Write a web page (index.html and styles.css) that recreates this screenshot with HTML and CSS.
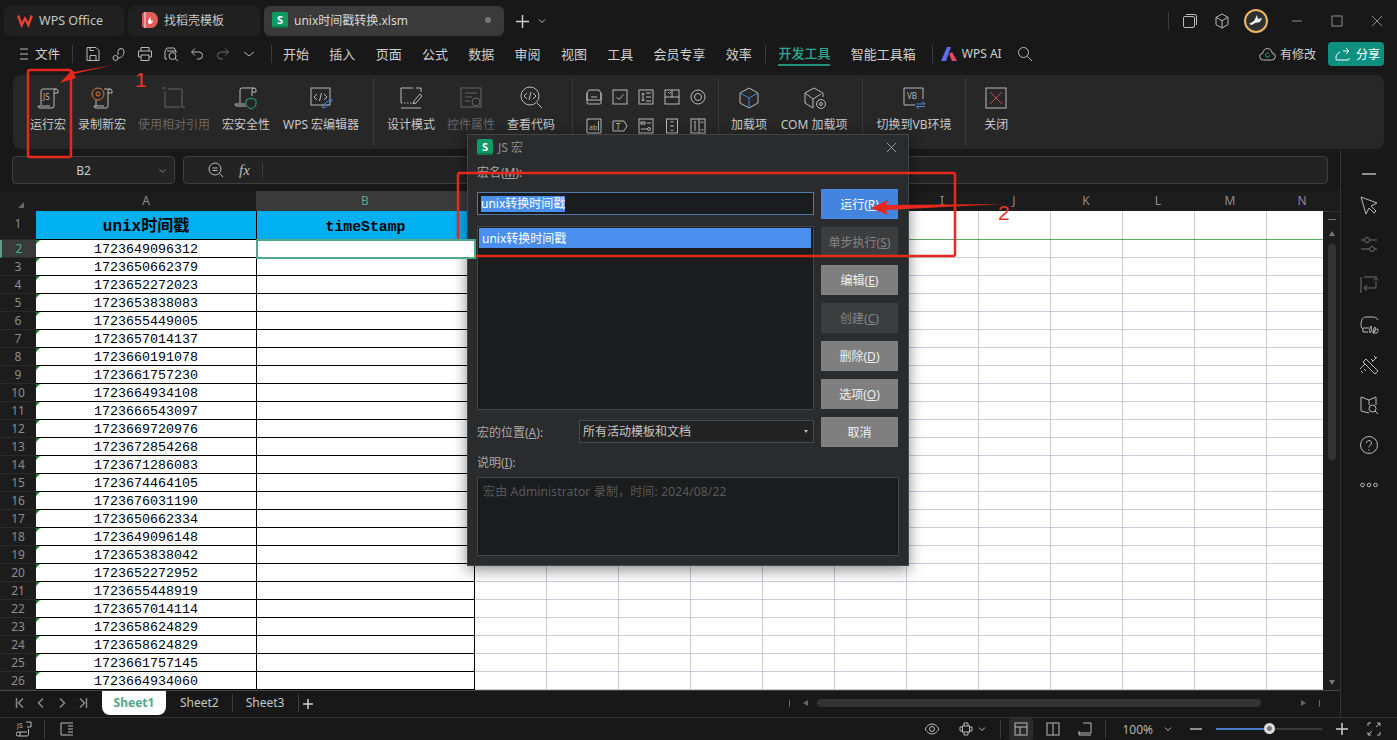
FILE: index.html
```html
<!DOCTYPE html>
<html lang="zh-CN">
<head>
  <meta charset="UTF-8">
  <title>unix时间戳转换.xlsm - WPS Office</title>
  <link rel="stylesheet" href="styles.css">
</head>
<body>
  <div class="titlebar">
    <div class="tab tab-home">
      <svg class="logo logo-wps" viewBox="0 0 16 16"><path d="M1.200 3.500L4.600 13 8 6.500 11.400 13l3.400-9.500"/></svg>
      <span>WPS Office</span>
    </div>
    <div class="tab tab-tpl">
      <svg class="logo" viewBox="0 0 16 16"><path d="M3 0h6a7 8 0 0 1 0 16H3a3 3 0 0 1-3-3V3a3 3 0 0 1 3-3z" fill="#e25a5a"/><path d="M3 0v16" stroke="#f2a0a0" stroke-width="2"/><path d="M8 4c0 3-2 3-2 6 0 1.500 1 2 2 2s3-1 3-3.500c-1 .5-1.500.5-2 0-.5-1-.5-3-1-4.500z" fill="#fff"/></svg>
      <span>找稻壳模板</span>
    </div>
    <div class="tab tab-active">
      <span class="s-badge">S</span>
      <span class="tab-name">unix时间戳转换.xlsm</span>
      <span class="tab-dot"></span>
    </div>
    <svg class="ic tab-plus" viewBox="0 0 16 16"><path d="M8 1v14M1 8h14"/></svg>
    <svg class="ic chev" viewBox="0 0 10 10"><path d="M2 3.500l3 3 3-3"/></svg>
    <div class="window-ctl">
      <i class="vsep"></i>
      <svg class="ic" viewBox="0 0 16 16"><rect x="1.500" y="3.500" width="11" height="11" rx="1.500"/><path d="M4 1.500h9a1.500 1.500 0 0 1 1.500 1.500v9"/></svg>
      <svg class="ic" viewBox="0 0 16 16"><path d="M8 1l6 3.300v7.400L8 15l-6-3.300V4.300zM2 4.300l6 3.400 6-3.400M8 7.700V15"/></svg>
      <div class="avatar"><svg viewBox="0 0 20 20"><path d="M3 13l5-3 3-6 1 4 4-1-2 4-5 1-3 2z" fill="#f4f4f4"/></svg></div>
      <svg class="ic win-min" viewBox="0 0 12 12"><path d="M1 6h10"/></svg>
      <svg class="ic win-max" viewBox="0 0 12 12"><rect x="1" y="1" width="10" height="10"/></svg>
      <svg class="ic win-close" viewBox="0 0 12 12"><path d="M1 1l10 10M11 1L1 11"/></svg>
    </div>
  </div>

  <div class="menubar">
    <svg class="ic ic-menu" viewBox="0 0 8 12"><path d="M0 1h8M0 6h8M0 11h8"/></svg>
    <span class="file-label">文件</span>
    <i class="vsep sep-file"></i>
    <div class="quick">
      <svg class="ic" viewBox="0 0 16 16"><path d="M2 1.500h9l3 3v10H2zM5 14.500v-5h6v5M5 1.500v3h4"/></svg>
      <svg class="ic" viewBox="0 0 16 16"><circle cx="4.500" cy="12" r="2.500"/><path d="M7 12c3 0 6-2 6-6.500a3 3 0 0 0-6 0V9"/></svg>
      <svg class="ic" viewBox="0 0 16 16"><path d="M4 5V1.500h8V5M4 11H1.500V5h13v6H12M4 9h8v5.500H4z"/></svg>
      <svg class="ic" viewBox="0 0 16 16"><path d="M4 13H2V5l2-3h7l2 3v2M4 5h9"/><circle cx="9.500" cy="10" r="3.500"/><path d="M12 12.500l3 2.500"/></svg>
      <svg class="ic" viewBox="0 0 16 16"><path d="M3 6h7a3.500 3.500 0 0 1 0 7H8M6 2.500L2.500 6 6 9.500"/></svg>
      <svg class="ic ic-off" viewBox="0 0 16 16"><path d="M13 6H6a3.500 3.500 0 0 0 0 7h2M10 2.500L13.500 6 10 9.500"/></svg>
      <svg class="ic" viewBox="0 0 16 16"><path d="M3 6l5 4 5-4"/></svg>
    </div>
    <i class="vsep sep-menu"></i>
    <nav class="menu">
      <span>开始</span><span>插入</span><span>页面</span><span>公式</span><span>数据</span><span>审阅</span><span>视图</span><span>工具</span><span>会员专享</span><span>效率</span>
      <i class="vsep"></i>
      <span class="on">开发工具</span><span>智能工具箱</span>
      <i class="vsep sep-ai"></i>
      <span class="wps-ai"><svg viewBox="0 0 16 14"><path d="M0 14L6 0h4L5 14z" fill="#5b6cf0"/><path d="M8 7l3 7h5l-5-9z" fill="#e8476a"/></svg>WPS AI</span>
      <svg class="ic ic-search" viewBox="0 0 16 16"><circle cx="6.500" cy="6.500" r="5"/><path d="M10.300 10.300L15 15"/></svg>
    </nav>
    <div class="menu-right">
      <svg class="ic ic-cloud" viewBox="0 0 17 14"><path d="M4.500 13a3.500 3.500 0 0 1-.5-7 4.500 4.500 0 0 1 9 0 3.500 3.500 0 0 1-.5 7z"/><path class="green" d="M10.500 8a2 2 0 1 1-1-1.700"/></svg>
      <span>有修改</span>
      <button class="share"><svg class="ic" viewBox="0 0 16 16"><path d="M8 5h6M11 2l3 3-3 3M5 6c-2 1-4 3-4 5v2a1 1 0 0 0 1 1h11a1 1 0 0 0 1-1v-1"/></svg>分享</button>
    </div>
  </div>

  <div class="ribbon">
    <div class="rb"><svg class="ic" viewBox="0 0 24 24"><path d="M5 19V5a2 2 0 0 1 2-2h13a2 2 0 0 0-2 2v15a2 2 0 0 1-2 2H4a2 2 0 0 1-2-2h12"/><path d="M20 3a2 2 0 0 1 2 2v2h-4"/><text x="7" y="14" class="ic-text">JS</text></svg><span>运行宏</span></div>
    <div class="rb"><svg class="ic" viewBox="0 0 24 24"><path d="M14 3h6a2 2 0 0 0-2 2v15a2 2 0 0 1-2 2H6a2 2 0 0 1-2-2h10M6 20V14"/><path d="M20 3a2 2 0 0 1 2 2v2h-4"/><circle class="orange" cx="8" cy="8" r="6"/><circle class="orange" cx="8" cy="8" r="2"/></svg><span>录制新宏</span></div>
    <div class="rb off"><svg class="ic" viewBox="0 0 24 24"><path d="M6 3h14v17M18 21H3V6"/><path d="M1 1v2M3 1v2M20 20v2M22 20v2"/></svg><span>使用相对引用</span></div>
    <div class="rb"><svg class="ic" viewBox="0 0 24 24"><path d="M6 17V4a2 2 0 0 1 2-2h12a2 2 0 0 0-2 2v6M12 20H3a2 2 0 0 1-2-2h10"/><path d="M20 2a2 2 0 0 1 2 2v2h-4"/><path class="green" d="M17 12l5 2v4c0 3-3 4-5 5-2-1-5-2-5-5v-4z"/></svg><span>宏安全性</span></div>
    <div class="rb rb-wps"><svg class="ic" viewBox="0 0 24 24"><rect x="2" y="2" width="19" height="17"/><path d="M8 8l-3 3 3 3M15 8l3 3-3 3M12.500 7l-2 8"/><path class="blue" d="M22 13l1.500 1.500-7 7-3 .5.500-3z"/></svg><span>WPS 宏编辑器</span></div>
    <i class="rb-sep"></i>
    <div class="rb"><svg class="ic" viewBox="0 0 24 24"><path d="M2 22h20M2 2h12M2 2v15M22 2v4M17 2h5"/><path class="dotted" d="M2 17h14"/><path d="M15 15l6-7 2 2-6 7-3 1z"/></svg><span>设计模式</span></div>
    <div class="rb off"><svg class="ic" viewBox="0 0 24 24"><rect x="2" y="2" width="20" height="19"/><path d="M6 7h12M6 11h7M6 15h5"/><circle cx="17" cy="16" r="4"/></svg><span>控件属性</span></div>
    <div class="rb"><svg class="ic" viewBox="0 0 24 24"><circle cx="11" cy="10" r="9"/><path d="M18 17l5 5M8 7l-3 3 3 3M14 7l3 3-3 3M12 6l-2 8"/></svg><span>查看代码</span></div>
    <i class="rb-sep sep-wide"></i>
    <div class="ctl-grid">
      <svg class="ic" viewBox="0 0 16 16"><path d="M3 1h10l2 3v10a1 1 0 0 1-1 1H2a1 1 0 0 1-1-1V4zM1 4v7h14V4M5 8h6"/></svg>
      <svg class="ic" viewBox="0 0 16 16"><rect x="1" y="1" width="14" height="14"/><path d="M4.500 8l2.500 2.500 4.500-5"/></svg>
      <svg class="ic" viewBox="0 0 16 16"><rect x="1" y="1" width="14" height="14"/><path d="M5 4v8M3.500 5.500L5 4l1.500 1.500M3.500 10.500L5 12l1.500-1.500M8 4h5M8 8h5M8 12h5"/></svg>
      <svg class="ic" viewBox="0 0 16 16"><rect x="1" y="1" width="14" height="14"/><path d="M1 8h14M8 1v7M4 3l1.500 1.500L7 3"/></svg>
      <svg class="ic" viewBox="0 0 16 16"><circle cx="8" cy="8" r="7"/><circle cx="8" cy="8" r="3.500"/></svg>
      <svg class="ic" viewBox="0 0 16 16"><path d="M1 1h14v14H1z"/><text x="3" y="12" class="ic-text small">ab</text><path d="M12.500 3v10"/></svg>
      <svg class="ic" viewBox="0 0 16 16"><path d="M1 3h11l3 5-3 5H1z"/><text x="4" y="12" class="ic-text">T</text></svg>
      <svg class="ic" viewBox="0 0 16 16"><rect x="1" y="1" width="14" height="14"/><rect x="3" y="4" width="4" height="2"/><path d="M9 5h4M3 11h6"/><circle cx="11" cy="11" r="1.500"/></svg>
      <svg class="ic" viewBox="0 0 16 16"><rect x="2.500" y="1" width="11" height="14"/><path d="M6 8h4M6.500 4.500L8 3l1.500 1.500M6.500 11.500L8 13l1.500-1.500"/></svg>
      <svg class="ic" viewBox="0 0 16 16"><rect x="1" y="1" width="14" height="14"/><path d="M5 4l1-1v10M10 1v14M11.500 5L13 3.500 14.500 5M11.500 11L13 12.500 14.500 11" transform="translate(-1 0)"/></svg>
    </div>
    <i class="rb-sep sep-tight"></i>
    <div class="rb"><svg class="ic" viewBox="0 0 24 24"><path d="M12 2l9 5v10l-9 5-9-5V7z"/><path class="blue" d="M3 7l9 5 9-5M12 12v10"/></svg><span>加载项</span></div>
    <div class="rb rb-com"><svg class="ic" viewBox="0 0 24 24"><path d="M11 13L11 22 3 17V7l9-5 9 5v4M3 7l8 6 8-5"/><circle cx="19" cy="18" r="4.500"/><circle cx="19" cy="18" r="1.500"/></svg><span>COM 加载项</span></div>
    <i class="rb-sep"></i>
    <div class="rb rb-vb"><svg class="ic" viewBox="0 0 24 24"><path d="M13 19H2V2h19v11"/><text x="5" y="13" class="ic-text">VB</text><path class="blue" d="M14 18h9M20 15.500l3 2.500M17 23l-3-2.500h9"/></svg><span>切换到VB环境</span></div>
    <i class="rb-sep"></i>
    <div class="rb rb-close"><svg class="ic" viewBox="0 0 24 24"><rect x="2" y="2" width="20" height="20"/><path class="red" d="M6 6l12 12M18 6L6 18"/></svg><span>关闭</span></div>
  </div>

  <div class="work">
    <div class="sheet-area">
      <div class="formula">
        <div class="namebox"><span>B2</span><svg class="ic" viewBox="0 0 10 10"><path d="M1.500 3.500L5 7l3.500-3.500"/></svg></div>
        <div class="fxbox">
          <svg class="ic" viewBox="0 0 16 16"><circle cx="7" cy="7" r="6"/><path d="M4.500 6h5M4.500 8.500h5M11.500 11.500L15 15"/></svg>
          <em>fx</em>
          <i class="vsep"></i>
        </div>
      </div>

      <div class="colhead">
        <span class="corner"></span>
        <span class="col-a">A</span>
        <span class="col-b">B</span>
        <span></span><span></span><span></span><span></span><span></span><span></span><span>I</span><span>J</span><span>K</span><span>L</span><span>M</span><span>N</span>
      </div>

      <div class="grid-wrap">
        <div class="grid">
          <div class="row row-title"><span class="rh">1</span><span class="cell head">unix时间戳</span><span class="cell head latin">timeStamp</span><span class="rest"></span></div>
          <div class="row row-active"><span class="rh">2</span><span class="cell num">1723649096312</span><span class="cell sel"></span><span class="rest"></span></div>
          <div class="row"><span class="rh">3</span><span class="cell num">1723650662379</span><span class="cell"></span><span class="rest"></span></div>
          <div class="row"><span class="rh">4</span><span class="cell num">1723652272023</span><span class="cell"></span><span class="rest"></span></div>
          <div class="row"><span class="rh">5</span><span class="cell num">1723653838083</span><span class="cell"></span><span class="rest"></span></div>
          <div class="row"><span class="rh">6</span><span class="cell num">1723655449005</span><span class="cell"></span><span class="rest"></span></div>
          <div class="row"><span class="rh">7</span><span class="cell num">1723657014137</span><span class="cell"></span><span class="rest"></span></div>
          <div class="row"><span class="rh">8</span><span class="cell num">1723660191078</span><span class="cell"></span><span class="rest"></span></div>
          <div class="row"><span class="rh">9</span><span class="cell num">1723661757230</span><span class="cell"></span><span class="rest"></span></div>
          <div class="row"><span class="rh">10</span><span class="cell num">1723664934108</span><span class="cell"></span><span class="rest"></span></div>
          <div class="row"><span class="rh">11</span><span class="cell num">1723666543097</span><span class="cell"></span><span class="rest"></span></div>
          <div class="row"><span class="rh">12</span><span class="cell num">1723669720976</span><span class="cell"></span><span class="rest"></span></div>
          <div class="row"><span class="rh">13</span><span class="cell num">1723672854268</span><span class="cell"></span><span class="rest"></span></div>
          <div class="row"><span class="rh">14</span><span class="cell num">1723671286083</span><span class="cell"></span><span class="rest"></span></div>
          <div class="row"><span class="rh">15</span><span class="cell num">1723674464105</span><span class="cell"></span><span class="rest"></span></div>
          <div class="row"><span class="rh">16</span><span class="cell num">1723676031190</span><span class="cell"></span><span class="rest"></span></div>
          <div class="row"><span class="rh">17</span><span class="cell num">1723650662334</span><span class="cell"></span><span class="rest"></span></div>
          <div class="row"><span class="rh">18</span><span class="cell num">1723649096148</span><span class="cell"></span><span class="rest"></span></div>
          <div class="row"><span class="rh">19</span><span class="cell num">1723653838042</span><span class="cell"></span><span class="rest"></span></div>
          <div class="row"><span class="rh">20</span><span class="cell num">1723652272952</span><span class="cell"></span><span class="rest"></span></div>
          <div class="row"><span class="rh">21</span><span class="cell num">1723655448919</span><span class="cell"></span><span class="rest"></span></div>
          <div class="row"><span class="rh">22</span><span class="cell num">1723657014114</span><span class="cell"></span><span class="rest"></span></div>
          <div class="row"><span class="rh">23</span><span class="cell num">1723658624829</span><span class="cell"></span><span class="rest"></span></div>
          <div class="row"><span class="rh">24</span><span class="cell num">1723658624829</span><span class="cell"></span><span class="rest"></span></div>
          <div class="row"><span class="rh">25</span><span class="cell num">1723661757145</span><span class="cell"></span><span class="rest"></span></div>
          <div class="row"><span class="rh">26</span><span class="cell num">1723664934060</span><span class="cell"></span><span class="rest"></span></div>
        </div>
        <div class="vscroll">
          <i class="vs-dash"></i>
          <i class="tri-up"></i>
          <i class="vs-thumb"></i>
          <i class="tri-down"></i>
        </div>
      </div>

      <div class="sheetbar">
        <div class="sheet-nav">
          <svg class="ic" viewBox="0 0 10 12"><path d="M1.500 1v10M8 1.500L3.500 6 8 10.500"/></svg>
          <svg class="ic" viewBox="0 0 10 12"><path d="M7 1.500L2.500 6 7 10.500"/></svg>
          <svg class="ic" viewBox="0 0 10 12"><path d="M3 1.500L7.500 6 3 10.500"/></svg>
          <svg class="ic" viewBox="0 0 10 12"><path d="M8.500 1v10M2 1.500L6.500 6 2 10.500"/></svg>
        </div>
        <span class="sheet sheet-on">Sheet1</span>
        <span class="sheet">Sheet2</span><i class="vsep"></i>
        <span class="sheet">Sheet3</span><i class="vsep"></i>
        <svg class="ic sheet-add" viewBox="0 0 10 10"><path d="M5 0v10M0 5h10"/></svg>
        <div class="hscroll">
          <i class="hs-mark"></i>
          <i class="tri-left"></i>
          <i class="hs-thumb"></i>
          <i class="tri-right"></i>
          <i class="hs-mark"></i>
        </div>
      </div>
    </div>

    <aside class="sidebar">
      <svg class="ic side-dash" viewBox="0 0 20 20"><path d="M3 10h14"/></svg>
      <svg class="ic" viewBox="0 0 20 20"><path d="M2 2l16 6-6 3 5 5-2 2-5-5-3 6z"/></svg>
      <svg class="ic ic-off" viewBox="0 0 20 20"><circle cx="8" cy="5" r="2.500"/><circle cx="13" cy="14" r="2.500"/><path d="M2 5h3.500M10.500 5H18M2 14h8.500M15.500 14H18"/></svg>
      <svg class="ic ic-off" viewBox="0 0 20 20"><path d="M2 2v16M5 2h13M17 6v6a1 1 0 0 1-1 1H6M8 10l-3 3 3 3M14.500 5.500L17 3l2.500 2.500"/></svg>
      <svg class="ic" viewBox="0 0 20 20"><path d="M9 17H4v-3c-2-1-2-3-2-5s1-7 5-7h7c2 0 4 1 5 3M4 13h6"/><path d="M11 18c-1-3 0-5 1-7 1 2 1 5-1 7zM14 18c0-3 1-5 2-6 1 3 0 5-2 6zM18 18c-1 0-3 0-4 0 0-2 3-4 5-4 0 2 0 3-1 4z"/></svg>
      <svg class="ic" viewBox="0 0 20 20"><path d="M4 7l3-3 12 12-3 3zM1 14l5-5M13 7l5-5"/><path d="M2 16l2 2M5 14l2 2M12 4l2 2M15 1l2 2"/></svg>
      <svg class="ic" viewBox="0 0 20 20"><path d="M10 18L2 16V2l8 3 7-3v8M10 5v5"/><circle cx="13.500" cy="13.500" r="3.500"/><path d="M16 16l3 3"/></svg>
      <svg class="ic" viewBox="0 0 20 20"><circle cx="10" cy="10" r="8.500"/><path d="M7.500 8a2.500 2.500 0 1 1 4 2c-1 .8-1.500 1.200-1.500 2.500M10 14.500v1"/></svg>
      <svg class="ic" viewBox="0 0 20 20"><circle cx="3.500" cy="10" r="1.800"/><circle cx="10" cy="10" r="1.800"/><circle cx="16.500" cy="10" r="1.800"/></svg>
    </aside>
  </div>

  <footer class="statusbar">
    <svg class="ic st-js" viewBox="0 0 16 16"><path d="M2 15h9a1.500 1.500 0 0 0 1.500-1.500V8M4 15v-4h7M2 15a1.500 1.500 0 0 1 0-4h2"/><text x="1" y="7" class="ic-text small">JS</text><path d="M10 1h5v5h-4"/></svg>
    <i class="vsep"></i>
    <svg class="ic st-pane" viewBox="0 0 14 14"><path d="M13 1H1v12h12M8 4h5M8 7h5M8 10h5"/></svg>
    <div class="status-right">
      <svg class="ic st-eye" viewBox="0 0 16 16"><path d="M1 8c2-3 4-5 7-5s5 2 7 5c-2 3-4 5-7 5s-5-2-7-5z"/><circle cx="8" cy="8" r="2.500"/></svg>
      <svg class="ic st-cross" viewBox="0 0 16 16"><rect x="4.500" y="5" width="7" height="6"/><path d="M6 5V2h4v3M6 11v3h4v-3M4.500 6H2v4h2.500M11.500 6H14v4h-2.500"/></svg>
      <svg class="ic chev" viewBox="0 0 10 10"><path d="M2 3.500l3 3 3-3"/></svg>
      <i class="vsep"></i>
      <span class="view view-on"><svg class="ic" viewBox="0 0 14 14"><rect x="1" y="1" width="12" height="12"/><path d="M1 5h12M6 5v8"/></svg></span>
      <span class="view"><svg class="ic" viewBox="0 0 14 14"><rect x="1" y="1" width="12" height="12"/><path d="M7 1v12"/></svg></span>
      <span class="view"><svg class="ic" viewBox="0 0 14 14"><path d="M5 1h8v10H1v2h12M1 11V9"/></svg></span>
      <i class="vsep"></i>
      <span class="zoom-val">100%</span>
      <svg class="ic chev" viewBox="0 0 10 10"><path d="M2 3.500l3 3 3-3"/></svg>
      <svg class="ic st-minus" viewBox="0 0 12 12"><path d="M0 6h12"/></svg>
      <div class="slider"><i class="slider-fill"></i><i class="slider-knob"></i></div>
      <svg class="ic st-plus" viewBox="0 0 12 12"><path d="M6 0v12M0 6h12"/></svg>
      <svg class="ic st-full" viewBox="0 0 14 14"><path d="M1 4V1h3M10 1h3v3M13 10v3h-3M4 13H1v-3M9 5l4-4M5 9l-4 4"/></svg>
    </div>
  </footer>

  <section class="dialog">
    <header class="dlg-title">
      <span class="s-badge">S</span>
      <span>JS 宏</span>
      <svg class="ic" viewBox="0 0 12 12"><path d="M1 1l10 10M11 1L1 11"/></svg>
    </header>
    <label class="dlg-name">宏名(<u>M</u>):</label>
    <div class="dlg-main">
      <div class="dlg-left">
        <div class="dlg-input"><span>unix转换时间戳</span></div>
        <div class="dlg-list"><div class="dlg-item">unix转换时间戳</div></div>
      </div>
      <div class="dlg-btns">
        <button class="primary">运行(<u>R</u>)</button>
        <button class="dim">单步执行(<u>S</u>)</button>
        <button>编辑(<u>E</u>)</button>
        <button class="dim">创建(<u>C</u>)</button>
        <button>删除(<u>D</u>)</button>
        <button>选项(<u>O</u>)</button>
        <button>取消</button>
      </div>
    </div>
    <div class="dlg-loc">
      <label>宏的位置(<u>A</u>):</label>
      <div class="dlg-select"><span>所有活动模板和文档</span><i class="tri-down small"></i></div>
    </div>
    <label class="dlg-desc-label">说明(<u>I</u>):</label>
    <div class="dlg-desc">宏由 Administrator 录制，时间: 2024/08/22</div>
  </section>

  <svg class="marks" viewBox="0 0 1397 740">
    <rect x="28" y="70" width="43" height="87" rx="2"/>
    <rect x="458" y="173" width="497" height="83" rx="2"/>
    <path class="arrow" d="M113 65L74 74 76 78 60 83 72 70 74 72z"/>
    <path class="arrow" d="M1003 204L886 205 888 200 871 208 888 215 886 210z"/>
  </svg>
  <span class="mark-num num-1">1</span>
  <span class="mark-num num-2">2</span>
</body>
</html>
```

FILE: styles.css
```css
* {
  box-sizing: border-box;
}
html, body {
  margin: 0;
  height: 100%;
}
body {
  position: relative;
  width: 1397px;
  height: 740px;
  overflow: hidden;
  display: flex;
  flex-direction: column;
  background-color: #181818;
  color: #cfcfcf;
  font-family: "Noto Sans", "Noto Sans CJK SC", sans-serif;
  font-size: 12px;
}
button {
  font-family: inherit;
  border: 0;
}
u {
  text-underline-offset: 1px;
}

/* icons */
.ic {
  display: block;
  flex: none;
  width: 16px;
  height: 16px;
  fill: none;
  stroke: #b9b9b9;
  stroke-width: 1;
}
.ic-off {
  stroke: #6e6e6e;
}
.ic .green { stroke: #2aa57f; }
.ic .blue { stroke: #4a86e0; }
.ic .orange { stroke: #d9793a; }
.ic .red { stroke: #c8455a; }
.ic .dotted { stroke-dasharray: 1.500 1.500; }
.ic-text {
  fill: #b9b9b9;
  stroke: none;
  font-size: 8px;
  font-family: "Noto Sans", sans-serif;
}
.ic-text.small {
  font-size: 7px;
}
.vsep {
  display: block;
  flex: none;
  width: 1px;
  height: 18px;
  background-color: #3c3c3c;
}
.chev {
  width: 10px;
  height: 10px;
}
.s-badge {
  flex: none;
  display: flex;
  align-items: center;
  justify-content: center;
  width: 16px;
  height: 16px;
  border-radius: 2px;
  border-bottom: 2px solid #0c7a4e;
  background-color: #109a66;
  color: #fff;
  font-size: 11px;
  font-weight: 700;
}

/* title bar */
.titlebar {
  flex: none;
  height: 36px;
  padding: 6px 14px 0 4px;
  display: flex;
  align-items: stretch;
  gap: 4px;
  font-size: 12px;
}
.tab {
  display: flex;
  align-items: center;
  gap: 6px;
  height: 30px;
  padding: 0 0 2px 14px;
  border-radius: 6px;
  background-color: #202020;
  color: #c5c5c5;
}
.logo {
  width: 16px;
  height: 16px;
  flex: none;
}
.logo-wps {
  fill: none;
  stroke: #e8402e;
  stroke-width: 2.400;
}
.tab-home { width: 120px; padding-left: 13px; font-size: 12.500px; }
.tab-tpl { width: 132px; }
.tab-active {
  width: 240px;
  padding-left: 8px;
  gap: 6px;
  background-color: #3a3a3a;
  color: #d8d8d8;
  font-size: 12px;
}
.tab-name {
  flex: 1;
}
.tab-dot {
  width: 6px;
  height: 6px;
  margin-right: 13px;
  border-radius: 50%;
  background-color: #777;
}
.tab-plus {
  align-self: center;
  width: 15px;
  height: 15px;
  margin-left: 7px;
  stroke: #d0d0d0;
  stroke-width: 1.500;
}
.titlebar > .chev {
  align-self: center;
  margin-left: 3px;
}
.window-ctl {
  margin-left: auto;
  display: flex;
  align-items: center;
}
.window-ctl .ic {
  margin-left: 16px;
}
.window-ctl .vsep + .ic {
  margin-left: 13px;
}
.avatar {
  width: 24px;
  height: 24px;
  margin-left: 14px;
  border: 2px solid #eab565;
  border-radius: 50%;
  background-color: #2f3030;
}
.avatar svg {
  display: block;
  width: 20px;
  height: 20px;
}
.window-ctl .win-min,
.window-ctl .win-max,
.window-ctl .win-close {
  width: 12px;
  height: 12px;
  stroke: #8d8d8d;
}
.window-ctl .win-min { margin-left: 23px; }
.window-ctl .win-max { margin-left: 28px; }
.window-ctl .win-close { margin-left: 28px; }

/* menu bar */
.menubar {
  flex: none;
  height: 39px;
  padding: 0 13px 4px 20px;
  display: flex;
  align-items: center;
  font-size: 13px;
  color: #d0d0d0;
}
.ic-menu {
  width: 8px;
  height: 12px;
}
.file-label {
  margin-left: 7px;
  font-size: 12.500px;
}
.sep-file {
  margin: 0 12px 0 12px;
}
.quick {
  display: flex;
  align-items: center;
  gap: 10px;
}
.quick .ic {
  width: 16px;
  height: 16px;
}
.sep-menu {
  margin: 0 11px 0 14px;
}
.menu {
  display: flex;
  align-items: center;
  gap: 20.300px;
  height: 100%;
}
.menu span {
  display: flex;
  align-items: center;
  height: 25px;
  white-space: nowrap;
  position: relative;
}
.menu .vsep {
  margin: 0 -7.500px;
}
.menu .sep-ai {
  margin: 0 -7px 0 -4.300px;
}
.menu .on {
  color: #2fa88f;
  font-weight: 500;
  border-bottom: 2px solid #23917d;
}
.wps-ai {
  gap: 5px;
  font-size: 12px;
  margin-left: -5.300px;
}
.wps-ai svg {
  width: 16px;
  height: 14px;
}
.menu .ic-search {
  margin-left: -5px;
}
.menu-right {
  margin-left: auto;
  display: flex;
  align-items: center;
  gap: 4px;
  font-size: 12px;
}
.ic-cloud {
  width: 17px;
  height: 14px;
}
.share {
  display: flex;
  align-items: center;
  gap: 5px;
  width: 56px;
  height: 24px;
  margin-left: 8px;
  padding: 0 0 0 7px;
  border-radius: 4px;
  background-color: #0e9080;
  color: #fff;
  font-size: 12px;
  white-space: nowrap;
}
.share .ic {
  stroke: #fff;
}

/* ribbon */
.ribbon {
  flex: none;
  height: 74px;
  margin: 0 13px;
  padding: 4px 0 4px 17px;
  display: flex;
  gap: 12px;
  border-radius: 8px;
  background-color: #272727;
}
.rb {
  display: flex;
  flex-direction: column;
  align-items: center;
  padding-top: 7px;
  white-space: nowrap;
  color: #c8c8c8;
}
.rb .ic {
  width: 24px;
  height: 24px;
  margin-bottom: 5px;
}
.rb span {
  line-height: 20px;
}
.rb.off {
  color: #666;
}
.rb.off .ic {
  stroke: #666;
}
.rb-wps { width: 78px; }
.rb-com { width: 70px; }
.rb-vb { width: 76px; }
.rb-sep {
  flex: none;
  width: 1px;
  margin: 0 1px;
  background-color: #3a3a3a;
}
.sep-wide {
  margin: 0 1px 0 5px;
}
.sep-tight {
  margin: 0;
}
.rb-close {
  margin-left: 5px;
}
.ctl-grid {
  display: grid;
  grid-template-columns: repeat(5, 16px);
  gap: 13px 10px;
  align-content: start;
  padding-top: 10px;
}

/* work area */
.work {
  flex: none;
  height: 567px;
  margin-top: 1px;
  display: flex;
}
.sheet-area {
  flex: 1;
  min-width: 0;
  display: flex;
  flex-direction: column;
}
.formula {
  flex: none;
  height: 41px;
  padding: 6px 12px 7px;
  display: flex;
  gap: 8px;
}
.namebox,
.fxbox {
  display: flex;
  align-items: center;
  border: 1px solid #3f3f3f;
  border-radius: 4px;
  background-color: #232323;
}
.namebox {
  flex: none;
  position: relative;
  width: 163px;
  justify-content: center;
  padding-right: 20px;
  color: #cdcdcd;
}
.namebox .ic {
  position: absolute;
  right: 7px;
  top: 9px;
  width: 9px;
  height: 9px;
  stroke: #8a8a8a;
}
.fxbox {
  flex: 1;
  padding-left: 24px;
  gap: 15px;
}
.fxbox em {
  font-family: "Liberation Serif", serif;
  font-size: 15px;
  color: #bdbdbd;
}
.fxbox .vsep {
  height: 16px;
  margin-left: -3px;
}

/* sheet */
.colhead {
  flex: none;
  height: 20px;
  display: grid;
  grid-template-columns: 36px 220px 218px repeat(12, 72px);
  overflow: hidden;
  color: #8d8d8d;
  line-height: 20px;
  text-align: center;
  background-color: #1c1c1c;
}
.corner {
  position: relative;
}
.corner::after {
  content: "";
  position: absolute;
  right: 12px;
  bottom: 3px;
  border: 3px solid transparent;
  border-right-color: #666;
  border-bottom-color: #666;
}
.col-b {
  background-color: #3a3a3a;
  color: #3fae92;
}
.grid-wrap {
  flex: none;
  height: 479px;
  display: flex;
}
.grid {
  width: 1323px;
  flex: none;
  overflow: hidden;
}
.row {
  height: 18px;
  display: grid;
  grid-template-columns: 36px 221px 218px 1fr;
  color: #000;
  line-height: 20px;
}
.row-title {
  height: 29px;
}
.rh {
  border-bottom: 1px solid #2a2a2a;
  background-color: #1c1c1c;
  color: #8d8d8d;
  font-size: 12px;
  line-height: 17px;
  text-align: center;
}
.row-title .rh {
  line-height: 26px;
}
.row-active .rh {
  border-left: 2px solid #4fa888;
  background-color: #3a3a3a;
  color: #3fae92;
}
.cell {
  position: relative;
  background-color: #fff;
  border-right: 1px solid #000;
  border-bottom: 1px solid #000;
  text-align: center;
  font-family: "Liberation Mono", "Noto Sans CJK SC", monospace;
  font-size: 13.330px;
  overflow: hidden;
}
.num::before {
  content: "";
  position: absolute;
  left: 0;
  top: 0;
  border: 2.500px solid transparent;
  border-left-color: #1f8a2f;
  border-top-color: #1f8a2f;
}
.head {
  background-color: #00b0f0;
  font-size: 16px;
  font-weight: 700;
  line-height: 33px;
}
.head.latin {
  font-size: 14.800px;
}
.sel {
  z-index: 1;
  overflow: visible;
  outline: 2px solid #4fa888;
  outline-offset: -1px;
}
.rest {
  background-color: #fff;
  background-image: repeating-linear-gradient(90deg, transparent 0, transparent 71px, #c6cbd6 71px, #c6cbd6 72px);
  border-bottom: 1px solid #c6cbd6;
}
.row-title .rest {
  border-bottom-color: #5fa65f;
}
.vscroll {
  flex: 1;
  position: relative;
  background-color: #1c1c1c;
  border-top: 1px solid #333;
}
.vs-dash {
  position: absolute;
  left: 5px;
  top: 7px;
  width: 8px;
  height: 1px;
  background-color: #777;
}
.vs-thumb {
  position: absolute;
  left: 5px;
  top: 32px;
  width: 8px;
  height: 216px;
  border-radius: 4px;
  background-color: #333;
}
.tri-up,
.tri-down {
  position: absolute;
  left: 6px;
  width: 0;
  height: 0;
  border: 3.500px solid transparent;
}
.tri-up {
  top: 16px;
  border-bottom: 5px solid #777;
}
.tri-down {
  bottom: 2px;
  border-top: 5px solid #777;
}
.tri-right,
.tri-left {
  display: block;
  flex: none;
  width: 0;
  height: 0;
  border: 3.500px solid transparent;
}
.tri-right {
  margin-left: 40px;
  border-left: 5px solid #666;
}
.tri-left {
  margin: 0 8.500px 0 10px;
  border-right: 5px solid #666;
}
.sheetbar {
  flex: 1;
  display: flex;
  align-items: flex-start;
  border-top: 1px solid #444;
  color: #c5c5c5;
}
.sheet-nav {
  flex: none;
  width: 102px;
  height: 24px;
  padding-left: 15px;
  display: flex;
  align-items: center;
  gap: 11px;
}
.sheet-nav .ic {
  width: 10px;
  height: 12px;
  stroke: #888;
  stroke-width: 1.500;
}
.sheet {
  height: 24px;
  padding: 0 13px;
  line-height: 23px;
}
.sheet-on {
  width: 64px;
  padding: 0;
  text-align: center;
  border-radius: 0 0 8px 8px;
  background-color: #fff;
  color: #4fa888;
  font-weight: 700;
}
.sheet-on + .sheet {
  margin-left: 1px;
}
.sheetbar .vsep {
  margin-top: 3px;
}
.sheet-add {
  width: 10px;
  height: 10px;
  margin: 8px 0 0 4px;
  stroke: #d0d0d0;
  stroke-width: 1.500;
}
.hscroll {
  margin-left: auto;
  margin-right: 17px;
  display: flex;
  align-items: center;
  width: 534px;
  height: 24px;
}
.hs-mark {
  flex: none;
  width: 1px;
  height: 7px;
  background-color: #666;
}
.hs-thumb {
  flex: none;
  width: 444px;
  height: 8px;
  border-radius: 4px;
  background-color: #333;
}
.tri-right + .hs-mark {
  margin-left: 10.500px;
}
.sidebar {
  flex: none;
  width: 57px;
  padding-top: 14px;
  display: flex;
  flex-direction: column;
  align-items: center;
  gap: 20px;
  border-left: 1px solid #333;
}
.sidebar .ic {
  width: 20px;
  height: 20px;
}
.sidebar .side-dash {
  margin-bottom: -9px;
  stroke-width: 1.500;
}

/* status bar */
.statusbar {
  flex: 1;
  display: flex;
  align-items: center;
  padding-left: 16px;
  border-top: 1px solid #333;
}
.st-js { margin-right: 12px; }
.st-pane { margin-left: 15px; width: 14px; height: 14px; }
.status-right {
  margin-left: auto;
  padding-right: 16px;
  display: flex;
  align-items: center;
  height: 100%;
}
.st-eye { margin-right: 18px; width: 16px; height: 16px; }
.st-cross { margin-right: 3px; }
.status-right .chev { margin-right: 13px; }
.view {
  display: flex;
  align-items: center;
  justify-content: center;
  width: 24px;
  height: 100%;
  margin-left: 8px;
}
.view .ic {
  width: 14px;
  height: 14px;
}
.view-on {
  background-color: #2a2a2a;
  border-radius: 3px;
}
.view + .vsep {
  margin-left: 8px;
}
.zoom-val {
  margin: 0 10px 0 16px;
  color: #b5b5b5;
}
.status-right .zoom-val + .chev {
  margin-right: 17px;
}
.st-minus { width: 12px; height: 12px; margin-right: 14px; stroke-width: 1.500; }
.st-plus { width: 12px; height: 12px; margin-left: 14px; stroke: #d0d0d0; stroke-width: 1.500; }
.st-full { width: 14px; height: 14px; margin-left: 19px; }
.slider {
  position: relative;
  width: 106px;
  height: 2px;
  background-color: #3a3a3a;
}
.slider-fill {
  position: absolute;
  left: 0;
  top: 0;
  width: 53px;
  height: 2px;
  background-color: #4a78c4;
}
.slider-knob {
  position: absolute;
  left: 48px;
  top: -5px;
  width: 11px;
  height: 11px;
  border: 3px solid #ddd;
  border-radius: 50%;
  background-color: #777;
}

/* dialog */
.dialog {
  position: absolute;
  left: 467px;
  top: 134px;
  width: 442px;
  height: 432px;
  padding: 0 9px;
  border: 1px solid #454545;
  background-color: #2a2b2d;
  box-shadow: 0 4px 14px rgba(0,0,0,0.45);
  color: #a9a9a9;
}
.dlg-title {
  height: 24px;
  display: flex;
  align-items: center;
  gap: 5px;
  color: #8f8f8f;
}
.dlg-title .ic {
  width: 11px;
  height: 11px;
  margin-left: auto;
  margin-right: 2px;
  stroke: #a9a9a9;
}
.dlg-name {
  display: block;
  height: 33px;
  padding-top: 5px;
  line-height: 18px;
}
.dlg-main {
  display: flex;
  gap: 7px;
}
.dlg-left {
  width: 337px;
  flex: none;
}
.dlg-input {
  height: 23px;
  margin-bottom: 11px;
  padding: 3px 3px;
  border: 1px solid #4d79ad;
  background-color: #1b1c1e;
  line-height: 16px;
}
.dlg-input span {
  display: inline-block;
  background-color: #4a8eee;
  color: #fff;
}
.dlg-list {
  height: 184px;
  padding: 1px 2px 1px 1px;
  border: 1px solid #464646;
  background-color: #1b1c1e;
}
.dlg-item {
  height: 20px;
  padding-left: 3px;
  background-color: #4a8eee;
  color: #fff;
  line-height: 22px;
}
.dlg-btns {
  width: 77px;
  flex: none;
  margin-top: -3px;
  display: flex;
  flex-direction: column;
  gap: 8px;
}
.dlg-btns button {
  height: 30px;
  padding: 0;
  background-color: #7f7f7f;
  color: #f0f0f0;
  font-size: 12px;
}
.dlg-btns .primary {
  background-color: #4384de;
  color: #fff;
}
.dlg-btns .dim {
  background-color: #3c3d3f;
  color: #858585;
}
.dlg-loc {
  display: flex;
  align-items: center;
  margin-top: -27px;
  width: 337px;
  height: 23px;
}
.dlg-loc label {
  flex: none;
  width: 102px;
}
.dlg-select {
  flex: 1;
  position: relative;
  height: 23px;
  padding-left: 3px;
  border: 1px solid #4a4a4a;
  background-color: #232323;
  color: #c5c5c5;
  line-height: 21px;
}
.tri-down.small {
  right: 5px;
  bottom: auto;
  left: auto;
  top: 9px;
  border-width: 2.500px;
  border-top: 3px solid #bbb;
}
.dlg-desc-label {
  display: block;
  height: 33px;
  padding-top: 10px;
  line-height: 20px;
}
.dlg-desc {
  width: 422px;
  height: 79px;
  margin-top: 1px;
  padding: 4px 5px;
  border: 1px solid #464646;
  background-color: #1b1c1e;
  color: #5a5a5a;
  line-height: 20px;
  letter-spacing: 0.150px;
}

/* red annotations */
.marks {
  position: absolute;
  left: 0;
  top: 0;
  width: 1397px;
  height: 740px;
  fill: none;
  stroke: #e6281f;
  stroke-width: 2.500;
  pointer-events: none;
}
.marks .arrow {
  fill: #e6281f;
  stroke: none;
}
.mark-num {
  position: absolute;
  color: #e8352b;
  font-size: 21px;
  line-height: 24px;
  font-family: "Liberation Sans", sans-serif;
}
.num-1 { left: 135px; top: 68px; }
.num-2 { left: 998px; top: 201px; }
```
